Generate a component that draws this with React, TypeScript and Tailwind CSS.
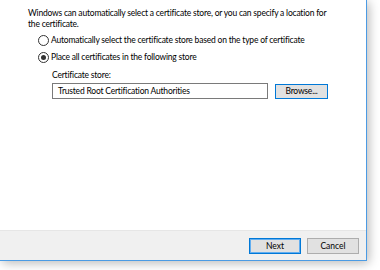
import React from "react";

function Radio({ checked }: { checked?: boolean }) {
  return (
    <span className="w-[11px] h-[11px] rounded-full border border-[#333333] bg-white flex items-center justify-center shrink-0">
      {checked && <span className="w-[5px] h-[5px] rounded-full bg-[#333333]" />}
    </span>
  );
}

export default function App() {
  return (
    <div
      className="w-[380px] h-[270px] bg-white overflow-hidden text-black whitespace-nowrap"
      style={{ fontFamily: 'Lato, "Noto Sans", sans-serif' }}
    >
      <div className="w-[367px] h-[261px] flex flex-col border-r border-b border-[#4b9be4] shadow-[2px_2px_10px_rgba(0,0,0,0.28)] bg-white">
        <div className="flex-1 pl-[28px] pt-[8px] text-[8.5px] leading-[11px] tracking-[-0.2px]">
          <p>
            Windows can automatically select a certificate store, or you can specify a location for
            <br />
            the certificate.
          </p>
          <div className="mt-[4px] ml-[10px] flex items-center gap-[2px] h-[12px]">
            <Radio />
            <span>Automatically select the certificate store based on the type of certificate</span>
          </div>
          <div className="mt-[5px] ml-[10px] flex items-center gap-[2px] h-[12px]">
            <Radio checked />
            <span>Place all certificates in the following store</span>
          </div>
          <div className="mt-[7px] ml-[24px] h-[11px]">Certificate store:</div>
          <div className="mt-[2px] ml-[24px] flex items-start">
            <div className="w-[216px] h-[16px] border border-[#7a7a7a] bg-white flex items-center pl-[5px]">
              Trusted Root Certification Authorities
            </div>
            <div className="ml-[7px] mt-[1px] w-[53px] h-[15px] border border-[#0078d7] bg-[#e1e1e1] flex items-center justify-center">
              Browse...
            </div>
          </div>
        </div>
        <div className="h-[30px] bg-[#f0f0f0] border-t border-[#e6e6e6] flex items-center justify-end pr-[7px] gap-[6px] text-[8.5px] pt-[1px]">
          <div className="w-[52px] h-[16px] border border-[#0078d7] shadow-[inset_0_0_0_1px_#62aef0] bg-[#e1e1e1] flex items-center justify-center">
            Next
          </div>
          <div className="w-[52px] h-[16px] border border-[#adadad] bg-[#e1e1e1] flex items-center justify-center">
            Cancel
          </div>
        </div>
      </div>
    </div>
  );
}
